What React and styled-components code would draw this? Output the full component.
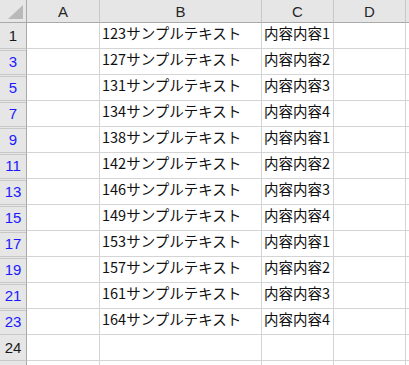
import React from 'react';
import styled, { createGlobalStyle } from 'styled-components';

const GlobalStyle = createGlobalStyle`
  html, body {
    margin: 0;
    padding: 0;
    background: #ffffff;
    overflow: hidden;
  }
  body {
    font-family: "Noto Sans CJK JP", "Liberation Sans", sans-serif;
  }
`

const rows = [
  { no: 1, num: 123, text: '内容内容1' },
  { no: 3, num: 127, text: '内容内容2' },
  { no: 5, num: 131, text: '内容内容3' },
  { no: 7, num: 134, text: '内容内容4' },
  { no: 9, num: 138, text: '内容内容1' },
  { no: 11, num: 142, text: '内容内容2' },
  { no: 13, num: 146, text: '内容内容3' },
  { no: 15, num: 149, text: '内容内容4' },
  { no: 17, num: 153, text: '内容内容1' },
  { no: 19, num: 157, text: '内容内容2' },
  { no: 21, num: 161, text: '内容内容3' },
  { no: 23, num: 164, text: '内容内容4' },
]

const App = () => {
  return (
    <>
      <GlobalStyle />
      <Sheet>
        <Corner>
          <Triangle />
        </Corner>
        {['A', 'B', 'C', 'D', ''].map((l, i) => (
          <ColHead key={i}>{l}</ColHead>
        ))}

        {rows.map((r) => (
          <React.Fragment key={r.no}>
            <RowHead $filtered={r.no !== 1} $hiddenAbove={r.no !== 1}>{r.no}</RowHead>
            <Cell />
            <Cell>{r.num}サンプルテキスト</Cell>
            <Cell>{r.text}</Cell>
            <Cell />
            <Cell />
          </React.Fragment>
        ))}

        <RowHead>24</RowHead>
        <Cell />
        <Cell />
        <Cell />
        <Cell />
        <Cell />

        <RowHead />
        <Cell />
        <Cell />
        <Cell />
        <Cell />
        <Cell />
      </Sheet>
    </>
  );
};

export default App;

const Sheet = styled.div`
  display: grid;
  grid-template-columns: 27px 73px 162px 72px 72px 20px;
  grid-template-rows: 23px repeat(14, 26px);
  width: 409px;
  height: 365px;
  overflow: hidden;
`
const Corner = styled.div`
  position: relative;
  background: #e6e6e6;
  border-right: 1px solid #a9a9a9;
  border-bottom: 1px solid #a9a9a9;
`
const Triangle = styled.div`
  position: absolute;
  right: 3px;
  bottom: 3px;
  width: 0;
  height: 0;
  border-left: 15px solid transparent;
  border-bottom: 14px solid #b9b9b9;
`
const ColHead = styled.div`
  background: #e6e6e6;
  border-right: 1px solid #c8c8c8;
  border-bottom: 1px solid #a9a9a9;
  display: flex;
  align-items: center;
  justify-content: center;
  font-family: "Liberation Sans", "Noto Sans CJK JP", sans-serif;
  font-size: 15px;
  color: #262626;
  padding-top: 1px;
`
const RowHead = styled.div`
  position: relative;
  background: #e6e6e6;
  border-right: 1px solid #a9a9a9;
  border-bottom: 1px solid #c8c8c8;
  display: flex;
  align-items: center;
  justify-content: center;
  font-family: "Liberation Sans", "Noto Sans CJK JP", sans-serif;
  font-size: 15px;
  color: ${(p) => (p.$filtered ? '#1a1aff' : '#1a1a1a')};
  padding-bottom: 1px;
  &::before {
    content: "";
    display: ${(p) => (p.$hiddenAbove ? 'block' : 'none')};
    position: absolute;
    left: 0;
    right: 0;
    top: 1px;
    height: 1px;
    background: #c8c8c8;
  }
`
const Cell = styled.div`
  border-right: 1px solid #d4d4d4;
  border-bottom: 1px solid #d4d4d4;
  display: flex;
  align-items: flex-end;
  padding: 0 0 5px 2px;
  font-size: 14.5px;
  line-height: 20px;
  color: #111111;
  white-space: nowrap;
  overflow: hidden;
`
